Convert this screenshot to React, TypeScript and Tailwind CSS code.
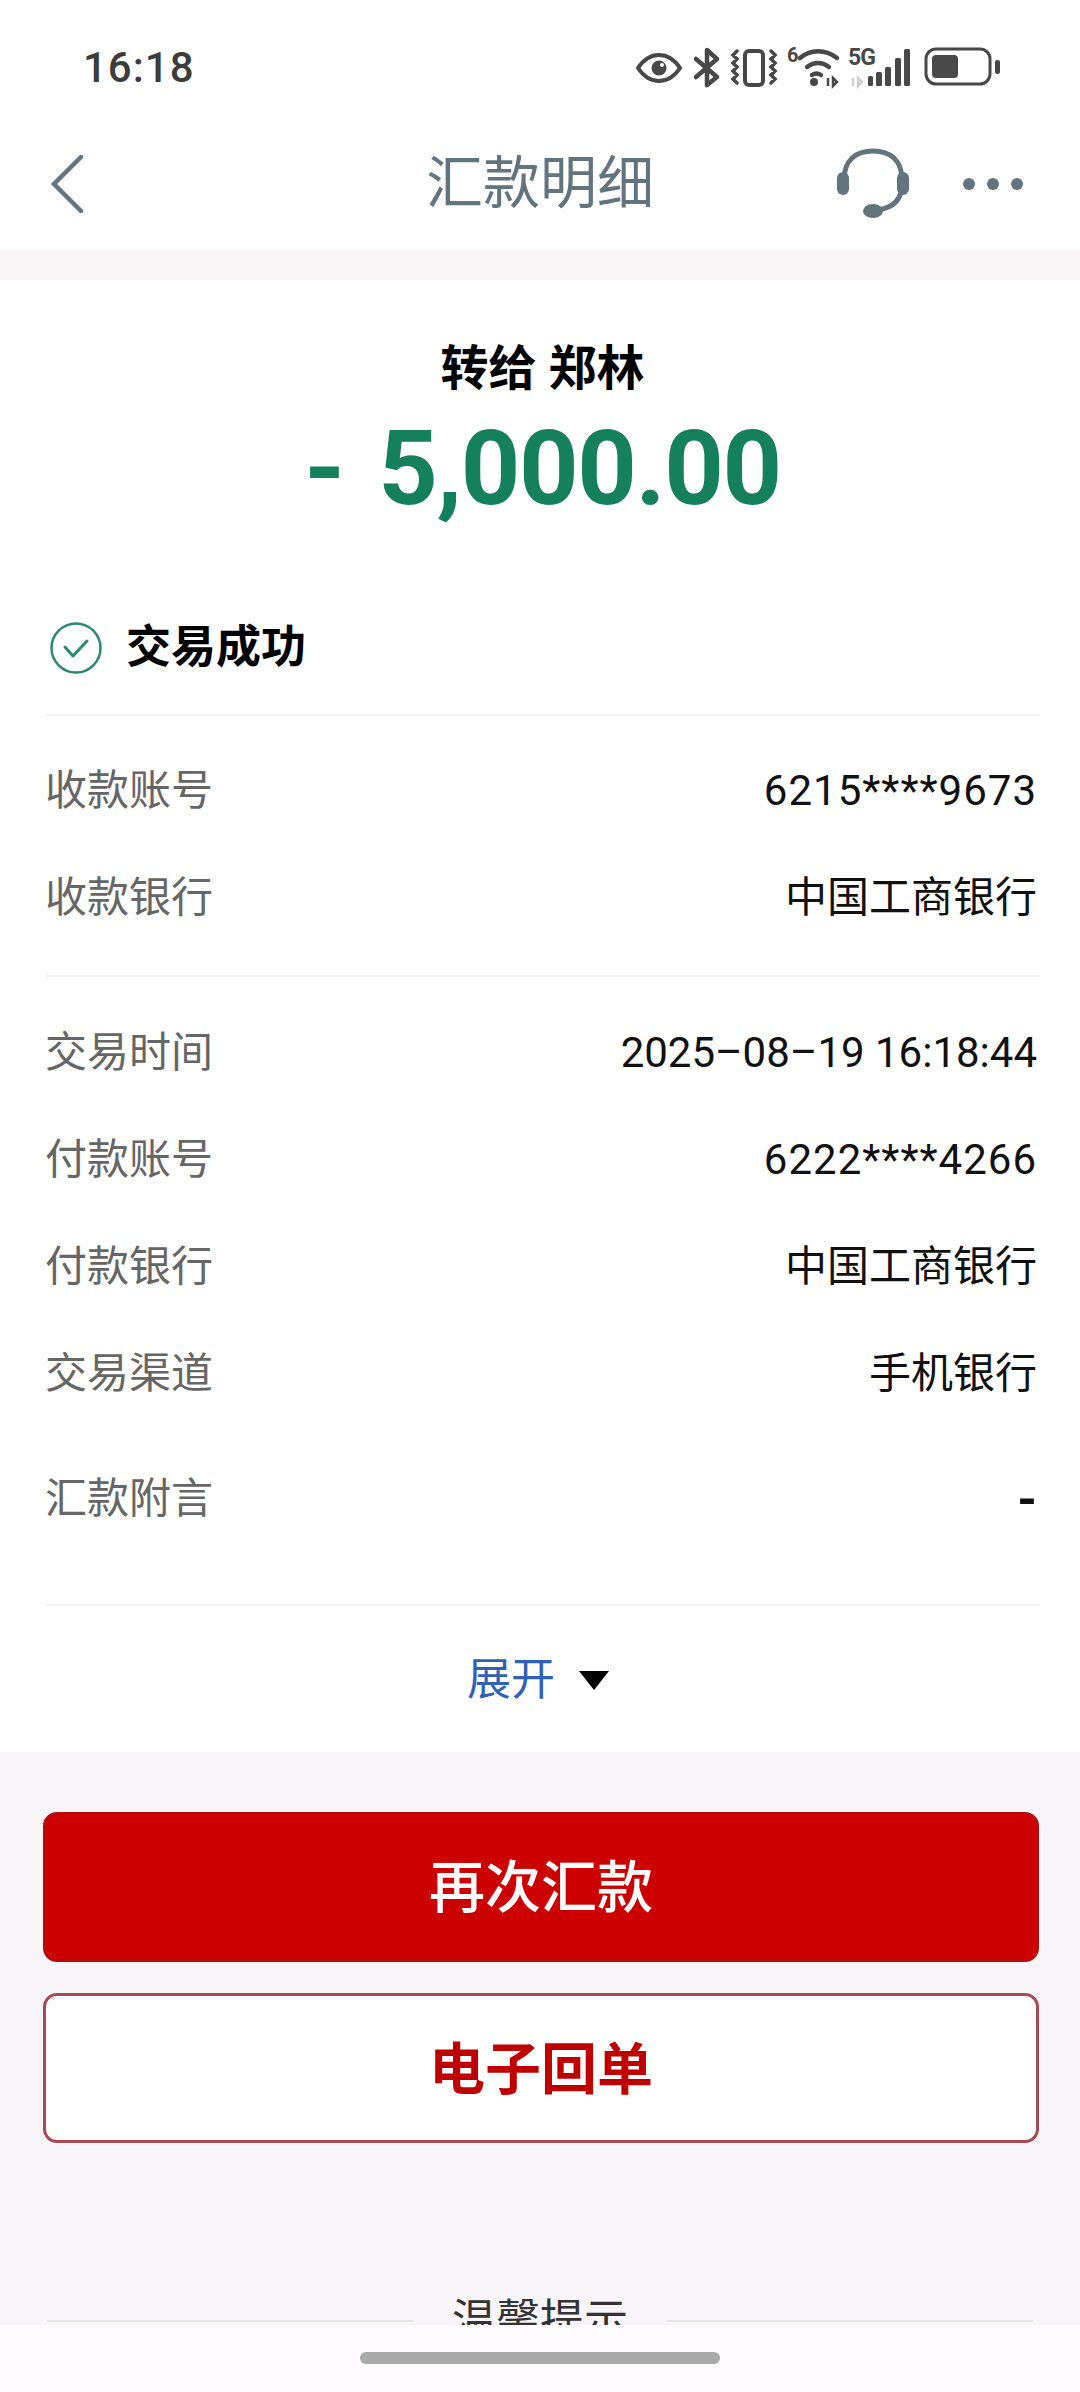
import type { ReactNode } from "react"

function StatusIcons() {
  return (
    <svg width="370" height="50" viewBox="636 42 370 50" className="text-[#484848]" fill="none" stroke="currentColor">
      {/* eye */}
      <path d="M638 68c6-9 13-13 21-13s15 4 21 13c-6 9-13 13-21 13s-15-4-21-13z" strokeWidth="4" />
      <circle cx="659" cy="68" r="7.5" fill="currentColor" stroke="none" />
      <circle cx="662" cy="65" r="2" fill="#fff" stroke="none" />
      {/* bluetooth */}
      <path d="M696 59l21 18-10 8V50l10 9-21 18" strokeWidth="4.5" strokeLinejoin="round" strokeLinecap="round" />
      {/* vibrate */}
      <rect x="745" y="51" width="18" height="34" rx="4" strokeWidth="4" />
      <path d="M737 51l-4 4 4 4-4 4 4 4-4 4 4 4-4 4 4 4M771 51l4 4-4 4 4 4-4 4 4 4-4 4 4 4-4 4" strokeWidth="3.5" strokeLinecap="round" />
      {/* wifi */}
      <text x="787" y="62" fontSize="20" fontWeight="700" fill="currentColor" stroke="none" fontFamily="Roboto, sans-serif">6</text>
      <path d="M800 58c11-9 25-9 37 0M807 67c7-5 15-5 22 0M812 75c3-2 6-2 9 0" strokeWidth="4.5" strokeLinecap="round" />
      <circle cx="814" cy="82" r="4" fill="currentColor" stroke="none" />
      <path d="M828 78v8M833 78l4 4-4 4z" strokeWidth="2.5" />
      {/* 5G + signal */}
      <text x="848" y="65" fontSize="23" fontWeight="700" fill="currentColor" stroke="none" fontFamily="Roboto, sans-serif" letterSpacing="-1">5G</text>
      <path d="M853 78v8M858 78l4 4-4 4z" strokeWidth="2.5" className="text-[#cfcfcf]" />
      <rect x="868" y="76" width="5" height="10" rx="1.5" fill="currentColor" stroke="none" />
      <rect x="876" y="72" width="6" height="14" rx="1.5" fill="currentColor" stroke="none" />
      <rect x="885" y="67" width="6" height="19" rx="1.5" fill="currentColor" stroke="none" />
      <rect x="895" y="58" width="6" height="28" rx="1.5" fill="currentColor" stroke="none" />
      <rect x="904" y="49" width="6" height="37" rx="1.5" fill="currentColor" stroke="none" />
      {/* battery */}
      <rect x="926" y="49" width="64" height="35" rx="10" strokeWidth="3" />
      <rect x="932" y="55" width="26" height="23" rx="4" fill="currentColor" stroke="none" />
      <rect x="995" y="60" width="5" height="14" rx="2" fill="currentColor" stroke="none" />
    </svg>
  )
}

function Row({ label, value }: { label: string; value: ReactNode }) {
  return (
    <div className="flex h-[107px] items-center justify-between pr-[3px]">
      <span className="text-[#666666]">{label}</span>
      <span className="text-[#111111]">{value}</span>
    </div>
  )
}

export default function App() {
  return (
    <div
      className="relative h-[2392px] w-[1080px] overflow-hidden bg-[#f8f5f8] text-[42px]"
      style={{ fontFamily: 'Roboto, "Noto Sans CJK SC", sans-serif' }}
    >
      {/* Status bar */}
      <div className="flex h-[120px] items-center justify-between bg-white pl-[83px] pr-[74px] pt-[14px]">
        <span className="text-[42px] font-medium tracking-[1px] text-[#3c3c3c]">16:18</span>
        <StatusIcons />
      </div>

      {/* Nav */}
      <div className="flex h-[130px] items-center justify-between bg-white pb-[3px] pl-[50px] pr-[57px]">
        <div className="w-[200px]">
          <svg width="36" height="58" viewBox="0 0 36 58" fill="none" stroke="#62757f" strokeWidth="4.5" strokeLinecap="round">
            <path d="M31 2 4 29l27 27" />
          </svg>
        </div>
        <span className="ml-[7px] text-[57px] leading-none text-[#62757f]">汇款明细</span>
        <div className="flex w-[200px] items-center justify-end gap-[53px]">
          <svg width="74" height="72" viewBox="0 0 74 72" fill="none" stroke="#62757f">
            <path d="M8 32C8 12 20 3 37 3s29 9 29 29M66 36c0 16-9 24-25 26" strokeWidth="5" strokeLinecap="round" />
            <rect x="1" y="24" width="12" height="23" rx="6" fill="#62757f" stroke="none" />
            <rect x="61" y="24" width="12" height="23" rx="6" fill="#62757f" stroke="none" />
            <ellipse cx="37" cy="63" rx="10" ry="7" fill="#62757f" stroke="none" />
          </svg>
          <div className="flex gap-[12px]">
            <span className="h-[12px] w-[12px] rounded-full bg-[#62757f]" />
            <span className="h-[12px] w-[12px] rounded-full bg-[#62757f]" />
            <span className="h-[12px] w-[12px] rounded-full bg-[#62757f]" />
          </div>
        </div>
      </div>

      <div className="h-[30px] bg-[#f7f5f6]" />

      {/* Detail card */}
      <div className="h-[1472px] bg-white pl-[45px] pr-[40px]">
        <div className="pt-[59px] text-center text-[48px] font-bold leading-[60px] text-black">转给 郑林</div>
        <div className="mt-[10px] flex items-baseline justify-center gap-[33px] text-[104px] font-bold leading-[120px] text-[#15805c]">
          <span>-</span>
          <span className="tracking-[-1.4px]">5,000.00</span>
        </div>

        <div className="mt-[89px] flex h-[60px] items-center gap-[24px] pl-[5px]">
          <svg width="52" height="52" viewBox="0 0 52 52" fill="none" stroke="#2b8a6a" strokeWidth="2.5">
            <circle cx="26" cy="26" r="24.5" />
            <path d="M15 25l8 9 14-15" strokeWidth="3" strokeLinecap="round" strokeLinejoin="round" />
          </svg>
          <span className="text-[45px] font-bold text-black">交易成功</span>
        </div>

        <div className="mt-[36px] h-[2px] bg-[#f3f3f3]" />

        <div className="pt-[21px]">
          <Row label="收款账号" value={<span className="tracking-[1px]">6215****9673</span>} />
          <Row label="收款银行" value="中国工商银行" />
        </div>

        <div className="mt-[24px] h-[2px] bg-[#f3f3f3]" />

        <div className="pt-[22px]">
          <Row label="交易时间" value="2025–08–19 16:18:44" />
          <Row label="付款账号" value={<span className="tracking-[1px]">6222****4266</span>} />
          <Row label="付款银行" value="中国工商银行" />
          <Row label="交易渠道" value="手机银行" />
        </div>
        <div className="mt-[18px]">
          <Row
            label="汇款附言"
            value={<span className="inline-block pt-[12px] text-[50px] font-bold leading-none">-</span>}
          />
        </div>

        <div className="mt-[52px] h-[2px] bg-[#f3f3f3]" />

        <div className="flex h-[148px] items-center justify-center gap-[24px] pr-[9px]">
          <span className="text-[44px] text-[#2f62b4]">展开</span>
          <span className="h-0 w-0 border-x-[15px] border-t-[19px] border-x-transparent border-t-black" />
        </div>
      </div>

      {/* Actions */}
      <div className="flex flex-col gap-[31px] pl-[43px] pr-[41px] pt-[60px]">
        <div className="flex h-[150px] items-center justify-center rounded-[14px] border-2 border-[#ad0f0f] bg-[#cc0000] pt-[2px] text-[56px] font-medium text-white">
          再次汇款
        </div>
        <div className="flex h-[150px] items-center justify-center rounded-[14px] border-[3px] border-[#a84a55] bg-white pt-[3px] text-[56px] font-bold text-[#bf0000]">
          电子回单
        </div>
      </div>

      {/* Tips heading, cut off by the bottom bar */}
      <div className="mt-[148px] flex h-[60px] items-center gap-[39px] px-[47px]">
        <div className="h-[2px] flex-1 bg-[#e8e6e8]" />
        <span className="text-[44px] text-[#333333]">温馨提示</span>
        <div className="h-[2px] flex-1 bg-[#e8e6e8]" />
      </div>

      {/* Gesture bar */}
      <div className="absolute inset-x-0 bottom-0 flex h-[67px] justify-center bg-[#fdfbfd] pt-[27px]">
        <div className="h-[12px] w-[360px] rounded-full bg-[#aaaaaa]" />
      </div>
    </div>
  )
}
